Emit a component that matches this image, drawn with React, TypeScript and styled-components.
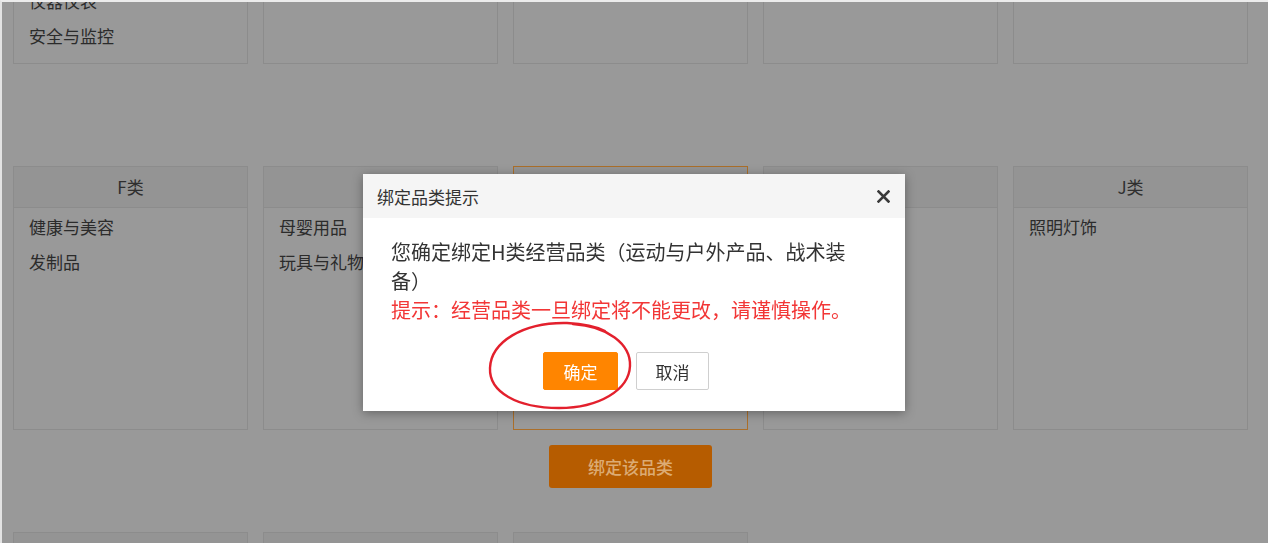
import { useLayoutEffect, useRef } from 'react'
import styled, { createGlobalStyle } from 'styled-components'

interface Category {
  letter: string
  items: string[]
}

const categories: Category[] = [
  { letter: 'A', items: ['家居与园艺', '电子产品', '汽车配件', '办公用品', '仪器仪表', '安全与监控'] },
  { letter: 'B', items: ['服装与配饰', '鞋类', '箱包'] },
  { letter: 'C', items: ['珠宝与手表', '眼镜'] },
  { letter: 'D', items: ['电脑与网络', '手机与配件', '消费电子'] },
  { letter: 'E', items: ['食品', '宠物用品'] },
  { letter: 'F', items: ['健康与美容', '发制品'] },
  { letter: 'G', items: ['母婴用品', '玩具与礼物'] },
  { letter: 'H', items: ['运动与户外产品', '战术装备'] },
  { letter: 'I', items: ['汽车与摩托车'] },
  { letter: 'J', items: ['照明灯饰'] },
  { letter: 'K', items: ['工业设备'] },
  { letter: 'L', items: ['五金工具'] },
  { letter: 'M', items: ['其他'] },
]

const selectedLetter = 'H'

const GlobalStyle = createGlobalStyle`
  html, body {
    margin: 0;
    padding: 0;
    height: 100%;
    overflow: hidden;
  }
  body {
    font-family: "Noto Sans CJK SC", "Noto Sans", sans-serif;
    color: #333;
  }
`

const Viewport = styled.div`
  height: 100vh;
  overflow: hidden;
  box-sizing: border-box;
  background: #999999;
  border-top: 2px solid #ececec;
  border-left: 2px solid #e3e3e3;
`

const CategoryGrid = styled.div`
  display: grid;
  grid-template-columns: repeat(5, 235px);
  column-gap: 15px;
  padding: 20px 0 40px 11px;
`

const Cell = styled.div`
  display: flex;
  flex-direction: column;
`

const Card = styled.div<{ $active: boolean }>`
  height: 264px;
  box-sizing: border-box;
  border: 1px solid ${({ $active }) => ($active ? '#ab6f2a' : '#8c8c8c')};
  display: flex;
  flex-direction: column;
`

const CardHeader = styled.div`
  height: 41px;
  box-sizing: border-box;
  line-height: 40px;
  border-bottom: 1px solid #8c8c8c;
  background: #949494;
  text-align: center;
  font-size: 17px;
  color: #2e2e2e;
`

const ItemList = styled.ul`
  list-style: none;
  margin: 0;
  padding: 1px 15px;
`

const Item = styled.li`
  font-size: 17px;
  line-height: 35px;
  color: #2b2b2b;
  white-space: nowrap;
`

const ActionSlot = styled.div`
  height: 102px;
  box-sizing: border-box;
  padding-top: 15px;
  display: flex;
  justify-content: center;
  align-items: flex-start;
`

const BindButton = styled.button`
  width: 163px;
  height: 43px;
  border: none;
  border-radius: 3px;
  background: #b65c00;
  color: #dcab74;
  font-family: inherit;
  font-size: 17px;
  font-weight: 500;
  cursor: pointer;
`

const Dialog = styled.div`
  position: fixed;
  top: 174px;
  left: 50%;
  transform: translateX(-50%);
  width: 542px;
  background: #fff;
  box-shadow: 0 2px 10px rgba(0, 0, 0, 0.35);
`

const DialogHeader = styled.div`
  height: 44px;
  display: flex;
  align-items: center;
  justify-content: space-between;
  padding: 0 15px 0 14px;
  background: #f5f5f5;
`

const DialogTitle = styled.span`
  font-size: 17px;
  color: #333;
`

const CloseButton = styled.button`
  border: none;
  background: none;
  padding: 0;
  width: 13px;
  height: 13px;
  display: flex;
  cursor: pointer;
`

const DialogBody = styled.div`
  padding: 19px 44px 21px 28px;
`

const Message = styled.p`
  margin: 0;
  font-size: 20px;
  line-height: 29px;
  color: #333;
`

const Warning = styled(Message)`
  color: #f23636;
`

const ButtonRow = styled.div`
  margin-top: 28px;
  display: flex;
  justify-content: center;
  gap: 18px;
`

const ConfirmWrap = styled.div`
  position: relative;
`

const DialogButton = styled.button<{ $primary?: boolean }>`
  height: 38px;
  width: ${({ $primary }) => ($primary ? '75px' : '73px')};
  box-sizing: border-box;
  border: 1px solid ${({ $primary }) => ($primary ? '#ff8500' : '#cfcfcf')};
  border-radius: 2px;
  background: ${({ $primary }) => ($primary ? '#ff8500' : '#fff')};
  color: ${({ $primary }) => ($primary ? '#fff' : '#333')};
  font-family: inherit;
  font-size: 17px;
  cursor: pointer;
`

const Annotation = styled.svg`
  position: absolute;
  left: -58px;
  top: -36px;
  pointer-events: none;
`

const CloseIcon = () => (
  <svg width="13" height="13" viewBox="0 0 13 13">
    <path d="M1.5 1.5 L11.5 11.5 M11.5 1.5 L1.5 11.5" stroke="#3a3a3a" strokeWidth="2.6" strokeLinecap="square" />
  </svg>
)

export default function App() {
  const viewportRef = useRef<HTMLDivElement>(null)

  useLayoutEffect(() => {
    if (viewportRef.current) {
      viewportRef.current.scrollTop = 222
    }
  }, [])

  return (
    <>
      <GlobalStyle />
      <Viewport ref={viewportRef}>
        <CategoryGrid>
          {categories.map((c) => (
            <Cell key={c.letter}>
              <Card $active={c.letter === selectedLetter}>
                <CardHeader>{c.letter}类</CardHeader>
                <ItemList>
                  {c.items.map((item) => (
                    <Item key={item}>{item}</Item>
                  ))}
                </ItemList>
              </Card>
              <ActionSlot>
                {c.letter === selectedLetter ? <BindButton>绑定该品类</BindButton> : null}
              </ActionSlot>
            </Cell>
          ))}
        </CategoryGrid>
      </Viewport>

      <Dialog>
        <DialogHeader>
          <DialogTitle>绑定品类提示</DialogTitle>
          <CloseButton aria-label="关闭">
            <CloseIcon />
          </CloseButton>
        </DialogHeader>
        <DialogBody>
          <Message>您确定绑定H类经营品类（运动与户外产品、战术装备）</Message>
          <Warning>提示：经营品类一旦绑定将不能更改，请谨慎操作。</Warning>
          <ButtonRow>
            <ConfirmWrap>
              <DialogButton $primary>确定</DialogButton>
              <Annotation width="150" height="96" viewBox="0 0 150 96">
                <path
                  d="M88 8 C122 10 146 28 145 50 C144 74 114 92 74 92 C32 92 4 76 5 52 C6 26 38 6 82 7 C100 8 112 11 120 15"
                  fill="none"
                  stroke="#e3202d"
                  strokeWidth="2.4"
                  strokeLinecap="round"
                />
              </Annotation>
            </ConfirmWrap>
            <DialogButton>取消</DialogButton>
          </ButtonRow>
        </DialogBody>
      </Dialog>
    </>
  )
}
